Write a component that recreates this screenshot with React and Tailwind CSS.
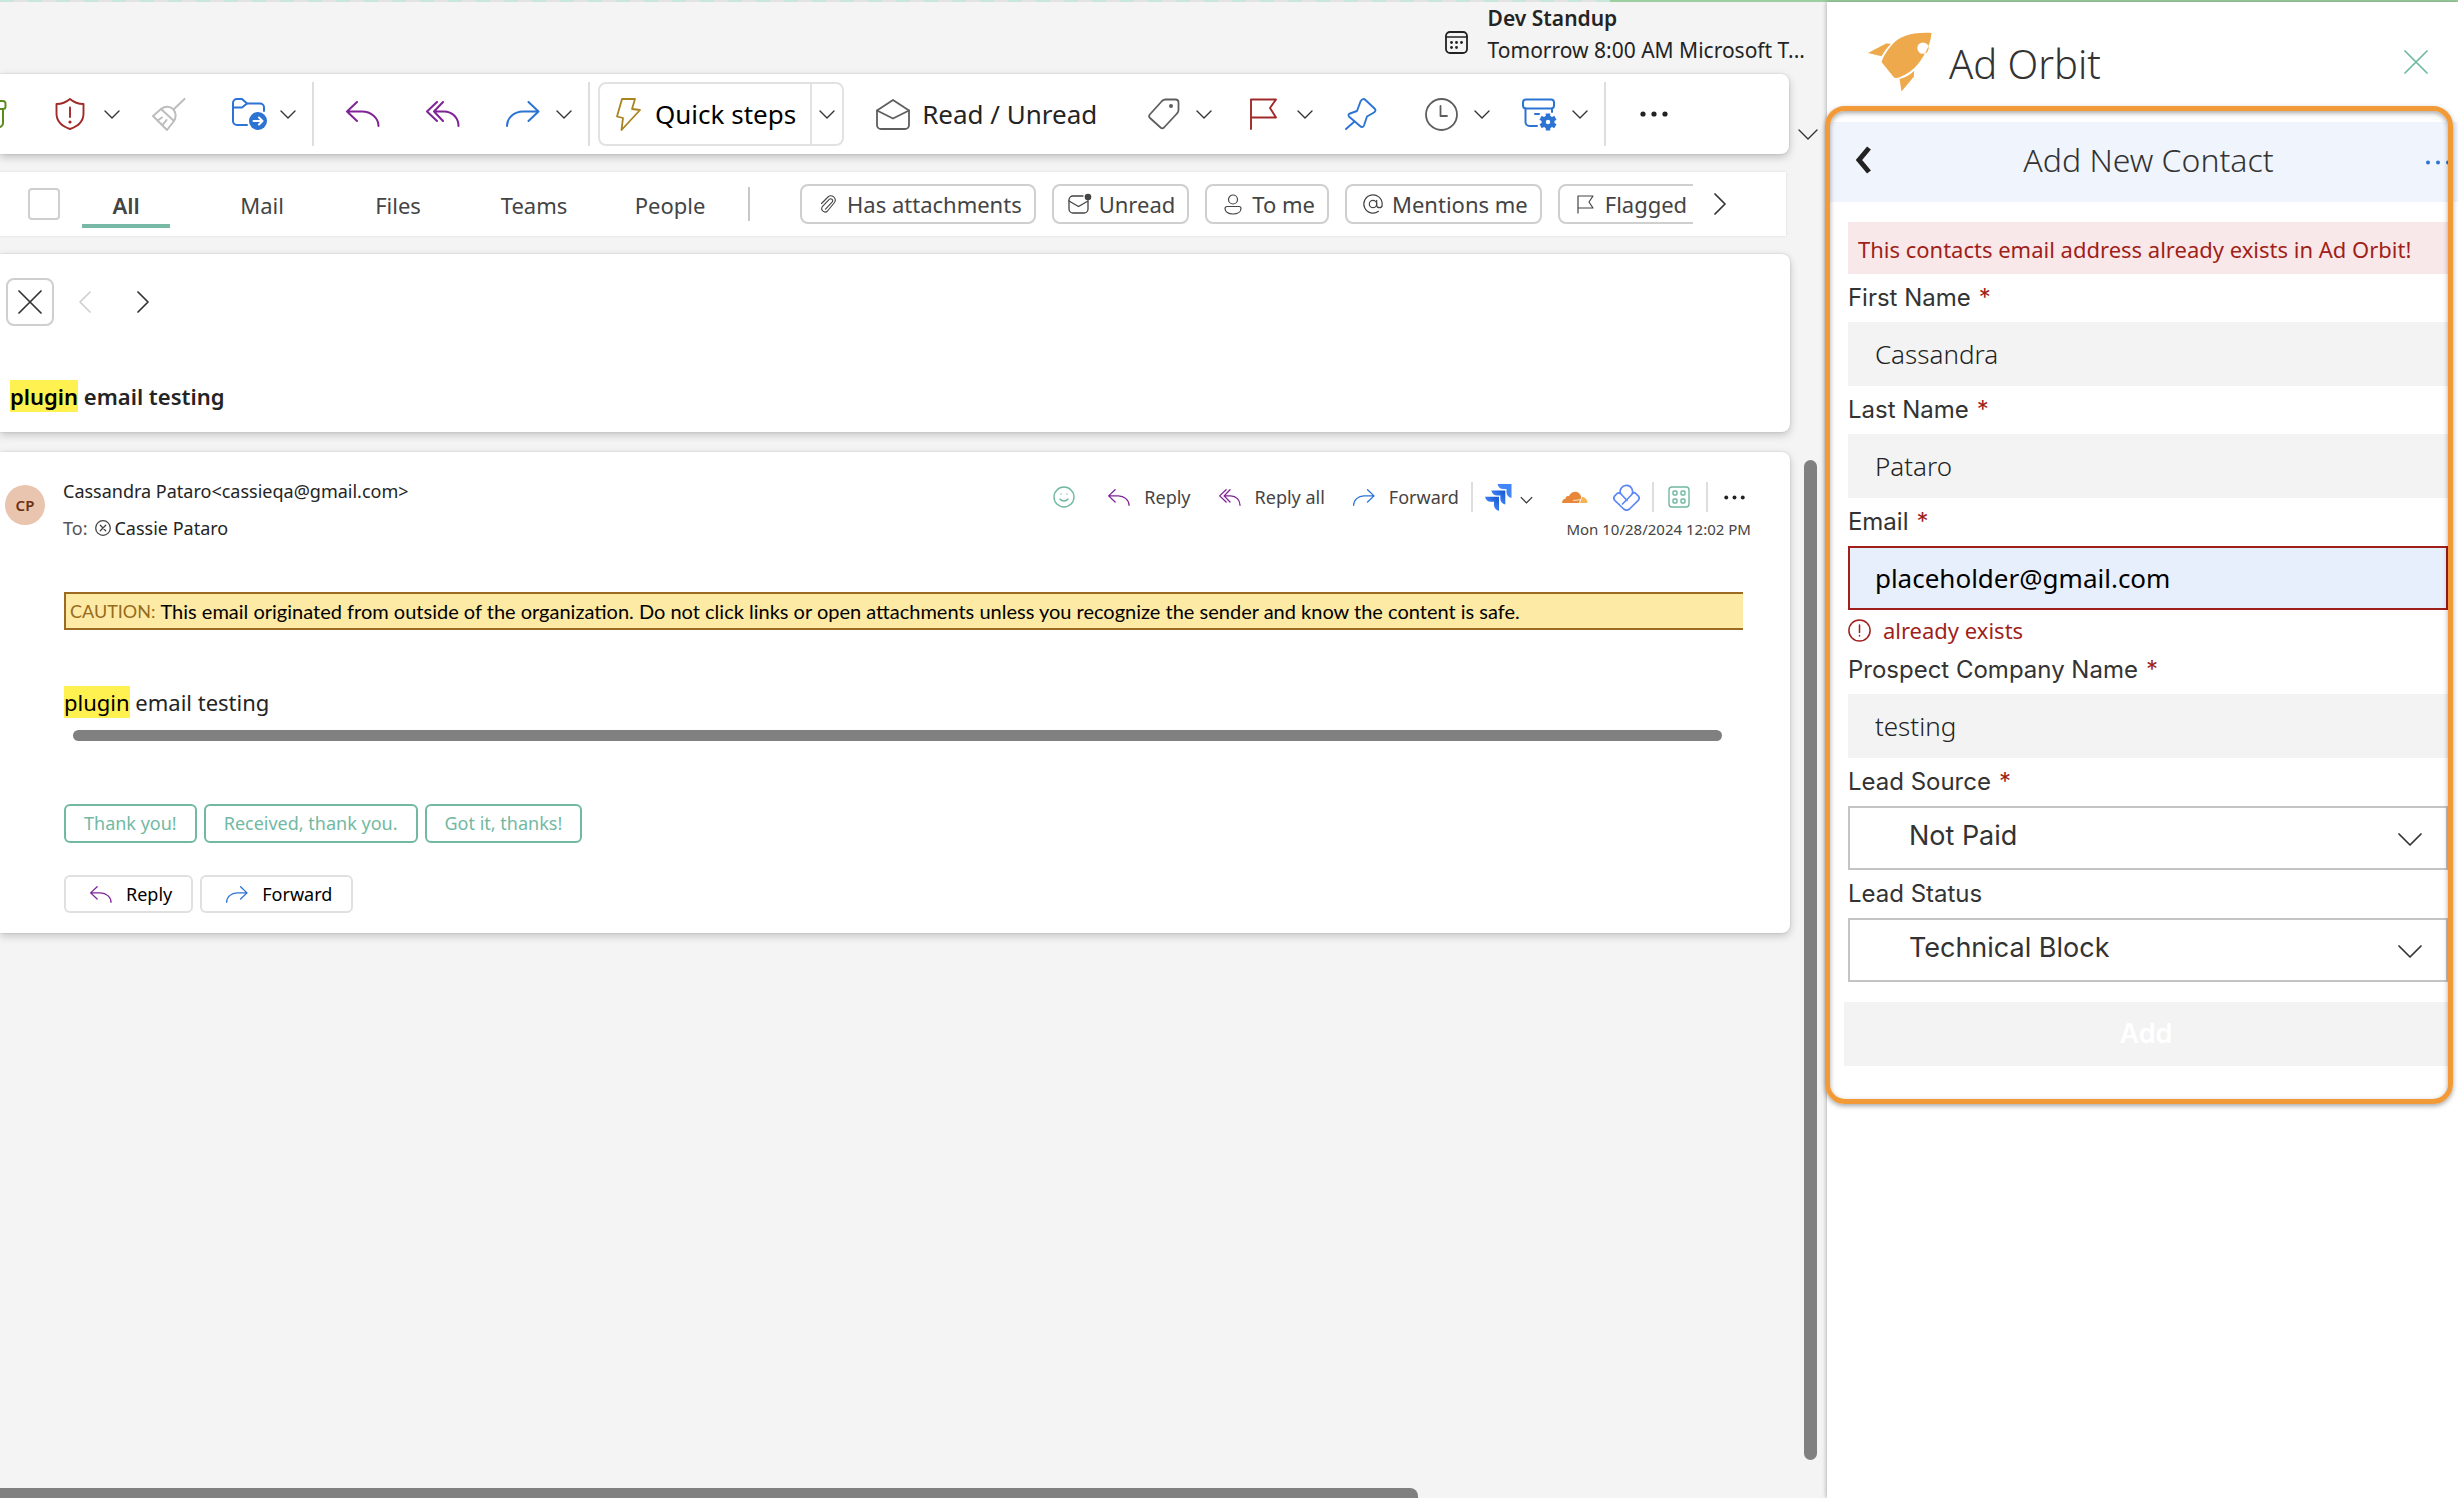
import { useState } from "react";
import { AtSign, Smile } from "lucide-react";

/* ---------- Icons ---------- */

function Svg({ w, h, stroke = 2, className = "", children }) {
  return (
    <svg
      width={w}
      height={h}
      viewBox={`0 0 ${w} ${h}`}
      fill="none"
      stroke="currentColor"
      strokeWidth={stroke}
      strokeLinecap="round"
      strokeLinejoin="round"
      className={`shrink-0 ${className}`}
      aria-hidden="true"
    >
      {children}
    </svg>
  );
}

const ChevronDown = ({ className = "" }) => (
  <Svg w={16} h={9} stroke={1.4} className={`text-[#333] ${className}`}>
    <path d="M1 1l7 7 7-7" />
  </Svg>
);

const ChevronSide = ({ left, className = "" }) => (
  <Svg w={12} h={22} stroke={1.7} className={className}>
    <path d={left ? "M11 1L1 11l10 10" : "M1 1l10 10L1 21"} />
  </Svg>
);

const Cross = ({ className = "" }) => (
  <Svg w={24} h={24} stroke={1.7} className={className}>
    <path d="M1 1l22 22M23 1L1 23" />
  </Svg>
);

const Dots = ({ small }) => (
  <svg
    width={small ? 21 : 28}
    height={small ? 5 : 6}
    viewBox="0 0 28 6"
    className="shrink-0 text-[#222]"
    fill="currentColor"
    aria-hidden="true"
  >
    <circle cx="3" cy="3" r="2.6" />
    <circle cx="14" cy="3" r="2.6" />
    <circle cx="25" cy="3" r="2.6" />
  </svg>
);

const arrowPaths = {
  reply: "M11 1L1 10.5 11 20M1 10.5h15C25 10.5 32.5 17 32.5 25",
  replyAll: "M11 1L1 10.5 11 20M17 1L8 10.5 17 20M8 10.5h10c8.5 0 14.5 6.5 14.5 14.5",
  forward: "M22.5 1l10 9.5-10 9.5M32.5 10.5H17C8 10.5 1 17 1 25",
};

// Reply, reply all and forward share one size and are scaled down in the message card
function Arrow({ kind, small }) {
  return (
    <svg
      width={small ? 22 : 34}
      height={small ? 17 : 26}
      viewBox="0 0 34 26"
      fill="none"
      stroke="currentColor"
      strokeWidth="2"
      strokeLinecap="round"
      strokeLinejoin="round"
      className={kind === "forward" ? "shrink-0 text-[#2b74d4]" : "shrink-0 text-[#7f2396]"}
      aria-hidden="true"
    >
      <path d={arrowPaths[kind]} />
    </svg>
  );
}

const ArchiveEdge = () => (
  <Svg w={7} h={28} className="text-[#5b8a1f]">
    <path d="M-4 1h7a2.5 2.5 0 0 1 2.5 2.5v3A2.5 2.5 0 0 1 3 9h-7M3 9v14a4 4 0 0 1-4 4" />
  </Svg>
);

const ShieldIcon = () => (
  <Svg w={30} h={32} stroke={1.9} className="text-[#a02a2a]">
    <path d="M15 1C11 4.5 6.5 6 1.5 6v9.5C1.5 23 6 28 15 31c9-3 13.5-8 13.5-15.5V6C23.5 6 19 4.500 15 1z" />
    <path d="M15 9.5V19" />
    <circle cx="15" cy="24" r="1.6" fill="currentColor" stroke="none" />
  </Svg>
);

const BroomIcon = () => (
  <Svg w={34} h={33} className="text-[#bdbdbd]">
    <path d="M32.5 1L22 11" />
    <path d="M1 18l8-7c4-3 9-3 12 0s3.5 8 1 12l-7 9z" />
    <path d="M9 11l13 12M5.500 22.5l4.500-3M10.500 27l4-5" />
  </Svg>
);

const FolderMoveIcon = () => (
  <Svg w={36} h={33} className="text-[#2b74d4]">
    <path d="M15 27H5a4 4 0 0 1-4-4V5a4 4 0 0 1 4-4h5l5 4.5h13a4 4 0 0 1 4 4V13" />
    <path d="M1 9.5h9l5-4" />
    <circle cx="26" cy="23" r="9" fill="currentColor" stroke="none" />
    <path d="M21.5 23h9M27 19.5l3.5 3.5-3.5 3.5" stroke="white" />
  </Svg>
);

const BoltIcon = () => (
  <Svg w={25} h={33} stroke={1.8} className="text-[#a9831f]">
    <path d="M6 1h13l-3 10 8 1L5.5 32 7 20l-6-1.5z" />
  </Svg>
);

const EnvelopeIcon = () => (
  <Svg w={34} h={31} stroke={1.8} className="text-[#5e5e5e]">
    <path d="M1 11.5L17 1l16 10.5V26a4 4 0 0 1-4 4H5a4 4 0 0 1-4-4z" />
    <path d="M1 11.5l16 8 16-8" />
  </Svg>
);

const TagIcon = () => (
  <Svg w={32} h={32} stroke={1.8} className="text-[#5e5e5e]">
    <path d="M17.5 1.5h10a3 3 0 0 1 3 3V12c0 1.500-.5 2.500-1.500 3.500L16 29.5c-1.2 1.2-2.3 1.2-3.5 0L2 20c-1.2-1.2-1.2-2.3-.2-3.5L14 3c1-1 2-1.5 3.5-1.5z" />
    <circle cx="23" cy="8" r="2" fill="currentColor" stroke="none" />
  </Svg>
);

const FlagIcon = () => (
  <Svg w={28} h={32} stroke={1.9} className="text-[#a02a2a]">
    <path d="M1 31V1.5h25L20 10l6 9.5H1" />
  </Svg>
);

const PinIcon = () => (
  <Svg w={32} h={32} stroke={1.9} className="text-[#2b74d4]">
    <path d="M15.5 3.5c1.5-3 3.5-3 5-1.500l9 8.500c1.500 1.500 1.200 3-.5 4L22 18.5l-3 9c-.8 2-2.5 2-4 .5L4.500 19c-1.500-1.500-1.500-2.700.5-3.500l7-2.500z" />
    <path d="M9.5 23.5L1 31" />
  </Svg>
);

const ClockIcon = () => (
  <Svg w={33} h={33} stroke={1.8} className="text-[#5e5e5e]">
    <circle cx="16.5" cy="16.5" r="15.5" />
    <path d="M15.5 8v10H22" />
  </Svg>
);

const ArchiveGearIcon = () => (
  <Svg w={36} h={33} className="text-[#2b74d4]">
    <rect x="1" y="1.5" width="31" height="9" rx="3" />
    <path d="M3.5 10.5V24a4 4 0 0 0 4 4H15M30 11v3M13 16h4" />
    <g strokeWidth="4.5" strokeLinecap="butt">
      <path d="M26 15.5v17M18.6 19.7l14.8 8.600M33.4 19.7l-14.8 8.600" />
    </g>
    <circle cx="26" cy="24" r="6.5" fill="currentColor" stroke="none" />
    <circle cx="26" cy="24" r="2.2" fill="white" stroke="none" />
  </Svg>
);

const CalendarIcon = () => (
  <Svg w={23} h={23} stroke={1.8} className="text-[#222]">
    <rect x="1" y="1" width="21" height="21" rx="4" />
    <path d="M1 6h21" strokeWidth="1.5" />
    <g fill="currentColor" stroke="none">
      <circle cx="6.5" cy="11.5" r="1.4" />
      <circle cx="11.5" cy="11.5" r="1.4" />
      <circle cx="16.5" cy="11.5" r="1.4" />
      <circle cx="6.5" cy="16.5" r="1.4" />
      <circle cx="11.5" cy="16.5" r="1.4" />
    </g>
  </Svg>
);

const ClipIcon = () => (
  <Svg w={17} h={19} stroke={1.1}>
    <path d="M1.5 8.5L8 2a4.300 4.300 0 0 1 6.500 5.500L7.500 16a3.400 3.400 0 0 1-5.200-4.300l7-7.400a2 2 0 0 1 3 2.600l-6.800 7.300" />
  </Svg>
);

const UnreadIcon = () => (
  <Svg w={24} h={22} stroke={1.3}>
    <path d="M15 3H5a4 4 0 0 0-4 4v9a4 4 0 0 0 4 4h11a4 4 0 0 0 4-4V8" />
    <path d="M1 8l9.5 5.5L20 8" />
    <circle cx="20" cy="4" r="3.300" fill="currentColor" stroke="none" />
  </Svg>
);

const PersonIcon = () => (
  <Svg w={18} h={21} stroke={1.2}>
    <circle cx="9" cy="5.5" r="4.5" />
    <path d="M3 12.5h12a2 2 0 0 1 2 2c0 3.5-3.5 5.500-8 5.500s-8-2-8-5.500a2 2 0 0 1 2-2z" />
  </Svg>
);

const FlagSmallIcon = () => (
  <Svg w={17} h={19} stroke={1.2}>
    <path d="M1 18V1h15l-4 6 4 6H1" />
  </Svg>
);

const JiraIcon = () => (
  <svg width="27" height="27" viewBox="0 0 27 27" className="shrink-0" aria-hidden="true">
    <defs>
      <linearGradient id="jira" x1="1" y1="0" x2="0.2" y2="0.8">
        <stop offset="0.2" stopColor="#1e5fd8" />
        <stop offset="0.8" stopColor="#4285f6" />
      </linearGradient>
    </defs>
    {[[0, 12.8], [6.3, 6.4], [12.5, 0]].map(([x, y]) => (
      <path
        key={x}
        transform={`translate(${x} ${y})`}
        fill={x > 12 ? "#4285f6" : "url(#jira)"}
        d="M0 0h14v14c-3-.6-5-2.800-5-5.700V5H5.800C2.900 5 .6 3 0 0z"
      />
    ))}
  </svg>
);

const CloudIcon = () => (
  <svg width="26" height="13" viewBox="0 0 26 13" className="shrink-0" aria-hidden="true">
    <path d="M0 12c0-2.800 1.500-4 3.500-4.200C3.500 5.500 5.300 4.300 7 5.200 9-.5 17.500-1.300 19.300 6L17 12z" fill="#e8873a" />
    <path d="M18 12l2-6c3.2 0 5.300 2.500 5.500 6z" fill="#f5b255" />
    <path d="M11 9.500l8-.8" stroke="#fff" strokeWidth="0.8" />
  </svg>
);

const LoopIcon = () => (
  <Svg w={27} h={27} stroke={1.7} className="text-[#5d87f5]">
    <path d="M14 16.500L7.500 9.500c-1.200-1-2.300-1-3.400 0L2 11.700c-1.600 1.700-1.600 3.200 0 4.900l8.700 8.400c2 1.700 3.800 1.700 5.800 0l8.500-8.400c1.600-1.700 1.600-3.200 0-4.900L22.800 9.500c-1-1-2-1-3-.2" />
    <path d="M7.500 9.500A6.200 6.200 0 1 1 18.800 10.500L9.500 20" />
  </Svg>
);

const AppsIcon = () => (
  <Svg w={22} h={22} stroke={1.4} className="text-[#6fb8a0]">
    <rect x="1" y="1" width="20" height="20" rx="3" />
    <rect x="5" y="5" width="4" height="4" rx="1" />
    <rect x="13" y="5" width="4" height="4" rx="1" />
    <rect x="5" y="13" width="4" height="4" rx="1" />
    <rect x="13" y="13" width="4" height="4" rx="1" />
  </Svg>
);

const RocketIcon = () => (
  <svg width="64" height="60" viewBox="0 0 64 60" fill="#efa94d" className="shrink-0" aria-hidden="true">
    <path
      fillRule="evenodd"
      d="M63.5 1C44 0 31 4 23 14c-5 6-8 11-9.500 16L26 45.500c2 1 4 .5 6-.5 7-2.500 13-7 18-13C58 22 63 10 63.500 1zM55 10.400a5.700 5.700 0 1 1 0 11.400 5.700 5.700 0 0 1 0-11.400z"
    />
    <path d="M0 21l18-9.500 5 .3c-4 4-7 8-9.500 12.400z" />
    <path d="M46 39v5.500L33.500 59.500 31.500 47C37 45.500 42 43 46 39z" />
  </svg>
);

const WarningIcon = () => (
  <Svg w={23} h={23} stroke={1.5}>
    <circle cx="11.5" cy="11.5" r="10.6" />
    <path d="M11.5 6v7.500M11.500 16.500v.5" />
  </Svg>
);

/* ---------- Mail pane ---------- */

const Divider = ({ className = "" }) => (
  <span className={`w-0.5 shrink-0 bg-[#dedede] ${className}`} />
);

function Ribbon() {
  return (
    <div className="flex">
      <div className="flex h-20 min-w-0 flex-1 items-center rounded-r-lg bg-white shadow-[0_3px_8px_rgba(0,0,0,0.22),0_0_2px_rgba(0,0,0,0.15)]">
        <button aria-label="Archive"><ArchiveEdge /></button>
        <button className="ml-12 flex items-center gap-[19px]" aria-label="Report">
          <ShieldIcon />
          <ChevronDown />
        </button>
        <button className="ml-8" aria-label="Sweep" disabled><BroomIcon /></button>
        <button className="ml-[46px] flex items-center gap-3" aria-label="Move to">
          <FolderMoveIcon />
          <ChevronDown />
        </button>
        <Divider className="ml-4 h-16" />
        <button className="ml-8" aria-label="Reply"><Arrow kind="reply" /></button>
        <button className="ml-[46px]" aria-label="Reply all"><Arrow kind="replyAll" /></button>
        <button className="ml-[46px] flex items-center gap-4" aria-label="Forward">
          <Arrow kind="forward" />
          <ChevronDown />
        </button>
        <Divider className="ml-4 h-16" />
        <div className="ml-2 flex h-16 shrink-0 rounded-lg border-2 border-[#e2e2e2]">
          <button className="flex items-center gap-3.5 pl-4 pr-[14px] text-[26px] text-black">
            <BoltIcon />
            Quick steps
          </button>
          <button className="flex items-center border-l-2 border-[#e2e2e2] px-[7px]" aria-label="More quick steps">
            <ChevronDown />
          </button>
        </div>
        <button className="ml-8 flex shrink-0 items-center gap-3 text-[26px] whitespace-nowrap text-[#242424]">
          <EnvelopeIcon />
          Read / Unread
        </button>
        <button className="ml-[51px] flex items-center gap-4" aria-label="Categorize">
          <TagIcon />
          <ChevronDown />
        </button>
        <button className="ml-[38px] flex items-center gap-[19px]" aria-label="Flag">
          <FlagIcon />
          <ChevronDown />
        </button>
        <button className="ml-8" aria-label="Pin"><PinIcon /></button>
        <button className="ml-12 flex items-center gap-4" aria-label="Snooze">
          <ClockIcon />
          <ChevronDown />
        </button>
        <button className="ml-8 flex items-center gap-[14px]" aria-label="Archive settings">
          <ArchiveGearIcon />
          <ChevronDown />
        </button>
        <Divider className="ml-4 h-16" />
        <button className="ml-[34px]" aria-label="More options"><Dots /></button>
      </div>
      <button className="flex w-[38px] items-end justify-center pb-3.5" aria-label="Ribbon options">
        <Svg w={20} h={11} stroke={1.4} className="text-[#333]">
          <path d="M1 1l9 9 9-9" />
        </Svg>
      </button>
    </div>
  );
}

const tabs = ["All", "Mail", "Files", "Teams", "People"];

const filters = [
  { label: "Has attachments", icon: <ClipIcon /> },
  { label: "Unread", icon: <UnreadIcon /> },
  { label: "To me", icon: <PersonIcon /> },
  { label: "Mentions me", icon: <AtSign size={22} strokeWidth={1.3} /> },
  { label: "Flagged", icon: <FlagSmallIcon /> },
];

function FilterBar() {
  const [tab, setTab] = useState("All");
  return (
    <div className="mr-[41px] mt-[18px] flex h-16 items-center bg-white pl-7 text-[22px] text-[#444] shadow-[0_0_2px_rgba(0,0,0,0.12)]">
      <input
        type="checkbox"
        aria-label="Select all"
        className="size-8 shrink-0 appearance-none rounded border-2 border-[#cfcfcf] bg-white"
      />
      <div className="ml-[22px] flex gap-12 self-start">
        {tabs.map((name) => (
          <button
            key={name}
            onClick={() => setTab(name)}
            className={
              name === tab
                ? "h-14 w-[88px] border-b-4 border-[#77b9a4] pt-3.5 font-semibold"
                : "h-14 w-[88px] border-b-4 border-transparent pt-3.5"
            }
          >
            {name}
          </button>
        ))}
      </div>
      <span className="ml-[34px] h-[34px] w-0.5 shrink-0 bg-[#c8c8c8]" />
      <div className="ml-[50px] flex min-w-0 flex-1 gap-4 overflow-hidden">
        {filters.map(({ label, icon }) => (
          <button
            key={label}
            className="flex h-10 shrink-0 items-center gap-[5px] whitespace-nowrap rounded-lg border-2 border-[#cfcfcf] px-3"
          >
            <span className="flex w-7 justify-center">{icon}</span>
            {label}
          </button>
        ))}
      </div>
      <button className="ml-[21px] mr-[60px]" aria-label="More filters">
        <ChevronSide className="text-[#333]" />
      </button>
    </div>
  );
}

function SubjectCard() {
  return (
    <div className="mr-[37px] mt-[18px] rounded-r-lg bg-white pb-5 pt-6 shadow-[0_3px_8px_rgba(0,0,0,0.2),0_0_2px_rgba(0,0,0,0.15)]">
      <div className="flex items-center pl-1.5">
        <button
          className="flex size-12 items-center justify-center rounded-lg border-2 border-[#cfcfcf] text-[#333]"
          aria-label="Close"
        >
          <Cross />
        </button>
        <button className="ml-[25px] text-[#cfcfcf]" aria-label="Previous message" disabled>
          <ChevronSide left />
        </button>
        <button className="ml-[46px] text-[#333]" aria-label="Next message">
          <ChevronSide />
        </button>
      </div>
      <h1 className="mt-[54px] pl-2.5 text-[22px] font-semibold leading-8">
        <mark className="inline-block bg-[#fff150] text-black">plugin</mark> email testing
      </h1>
    </div>
  );
}

function MessageActions() {
  return (
    <div className="flex h-[30px] items-center text-[18px] text-[#444]">
      <button className="text-[#6fb8a0]" aria-label="React">
        <Smile size={24} strokeWidth={1.4} />
      </button>
      <button className="ml-8 flex items-center gap-3.5"><Arrow kind="reply" small />Reply</button>
      <button className="ml-7 flex items-center gap-3.5"><Arrow kind="replyAll" small />Reply all</button>
      <button className="ml-7 flex items-center gap-3.5"><Arrow kind="forward" small />Forward</button>
      <Divider className="ml-3 h-[30px]" />
      <button className="ml-3 flex items-center gap-2" aria-label="Jira">
        <JiraIcon />
        <svg width="13" height="8" viewBox="0 0 16 9" fill="none" stroke="#333" strokeWidth="1.6" className="mt-1.5">
          <path d="M1 1l7 7 7-7" />
        </svg>
      </button>
      <button className="ml-[29px]" aria-label="Cloudflare"><CloudIcon /></button>
      <button className="ml-[25px]" aria-label="Loop"><LoopIcon /></button>
      <Divider className="ml-3 h-[30px]" />
      <button className="ml-3.5" aria-label="Apps"><AppsIcon /></button>
      <Divider className="ml-4 h-[30px]" />
      <button className="ml-4 mr-1.5" aria-label="More actions"><Dots small /></button>
    </div>
  );
}

function MessageCard() {
  return (
    <article className="rounded-r-lg bg-white pb-5 pt-[21px] shadow-[0_3px_8px_rgba(0,0,0,0.2),0_0_2px_rgba(0,0,0,0.15)]">
      <header className="flex pr-[39px]">
        <div className="ml-[5px] mt-3 flex size-10 shrink-0 items-center justify-center rounded-full bg-[#e9c4ae] text-[15px] font-semibold text-[#6d3013]">
          CP
        </div>
        <div className="ml-[18px] flex flex-col gap-px text-[18px] leading-9">
          <p>Cassandra Pataro&lt;cassieqa@gmail.com&gt;</p>
          <p className="flex items-center">
            <span className="text-[#555]">To:</span>
            <Svg w={16} h={16} stroke={1.3} className="ml-2 mr-[3px] text-[#444]">
              <circle cx="8" cy="8" r="7.300" />
              <path d="M5.3 5.3l5.4 5.4M10.7 5.3l-5.4 5.4" />
            </Svg>
            Cassie Pataro
          </p>
        </div>
        <div className="ml-auto mt-[9px] flex flex-col items-end">
          <MessageActions />
          <time className="text-[15px] leading-[34px] text-[#444]">Mon 10/28/2024 12:02 PM</time>
        </div>
      </header>

      <div className="ml-16">
        <p className="mr-[47px] mt-[46px] flex h-[38px] items-center gap-[5px] overflow-hidden whitespace-nowrap border-y-2 border-l-2 border-[#9c6a20] bg-[#fdeaa5] pl-1 font-['Lato',sans-serif] text-[20px] text-black">
          <span className="text-[18px] text-[#976a1c]">CAUTION:</span>
          <span>
            This email originated from outside of the organization. Do not click links or open attachments unless you
            recognize the sender and know the content is safe.
          </span>
        </p>

        <p className="mt-14 text-[22px] leading-8">
          <mark className="inline-block bg-[#fff150] text-black">plugin</mark> email testing
        </p>
        <div className="ml-[9px] mr-[68px] mt-3 h-[11px] rounded-full bg-[#808080]" />

        <div className="mt-[63px] flex gap-[7px] text-[18px] text-[#72b9a3]">
          {["Thank you!", "Received, thank you.", "Got it, thanks!"].map((text) => (
            <button key={text} className="h-[39px] rounded-md border-2 border-[#72b9a3] px-[18px]">
              {text}
            </button>
          ))}
        </div>

        <div className="mt-8 flex gap-[7px] text-[18px] text-black">
          <button className="flex h-[38px] items-center gap-3.5 rounded-md border-2 border-[#e0e0e0] pl-6 pr-[19px]">
            <Arrow kind="reply" small />
            Reply
          </button>
          <button className="flex h-[38px] items-center gap-3.5 rounded-md border-2 border-[#e0e0e0] pl-6 pr-[19px]">
            <Arrow kind="forward" small />
            Forward
          </button>
        </div>
      </div>
    </article>
  );
}

function MailPane() {
  return (
    <main className="flex min-w-0 flex-col overflow-hidden bg-[#f4f4f4]">
      <div className="flex h-[72px] justify-end pr-[22px] text-[21px] leading-8">
        <div className="mr-5 mt-2 flex items-center"><CalendarIcon /></div>
        <div>
          <p className="font-semibold">Dev Standup</p>
          <p>Tomorrow 8:00 AM Microsoft T...</p>
        </div>
      </div>
      <Ribbon />
      <FilterBar />
      <SubjectCard />
      <div className="mt-5 flex flex-1">
        <div className="min-w-0 flex-1"><MessageCard /></div>
        <div className="mb-7 ml-3.5 mr-2.5 mt-2 w-[13px] rounded-full bg-[#808080]" />
      </div>
      <div className="h-2.5 w-[77.6%] rounded-tr-lg bg-[#808080]" />
    </main>
  );
}

/* ---------- Ad Orbit pane ---------- */

function Label({ id, required, children }) {
  return (
    <label htmlFor={id} className="flex h-12 items-center gap-2 font-['Inter',sans-serif] text-[24px] text-[#333]">
      {children}
      {required && <span className="text-[#a01f1a]">*</span>}
    </label>
  );
}

function TextField({ id, label, value }) {
  return (
    <div>
      <Label id={id} required>{label}</Label>
      <input
        id={id}
        defaultValue={value}
        className="h-16 w-full bg-[#f3f3f3] px-[27px] text-[26px] font-light text-[#222]"
      />
    </div>
  );
}

function SelectField({ id, label, required, options }) {
  return (
    <div>
      <Label id={id} required={required}>{label}</Label>
      <div className="relative">
        <select
          id={id}
          className="h-16 w-full appearance-none border-2 border-[#c4c4c4] bg-white pb-1 pl-[59px] font-['Inter',sans-serif] text-[27px] text-[#333]"
        >
          {options.map((o) => (
            <option key={o}>{o}</option>
          ))}
        </select>
        <Svg w={24} h={14} stroke={1.7} className="pointer-events-none absolute right-[26px] top-[27px] text-[#333]">
          <path d="M1 1l11 11L23 1" />
        </Svg>
      </div>
    </div>
  );
}

function AdOrbitPane() {
  return (
    <aside className="relative min-w-0 bg-white shadow-[-1px_0_4px_rgba(0,0,0,0.25)]">
      <div className="flex h-[120px] items-center pl-[41px] pr-[30px]">
        <RocketIcon />
        <h2 className="ml-[17px] pt-1 text-[40px] font-light text-[#333]">Ad Orbit</h2>
        <button className="ml-auto text-[#6fb8a0]" aria-label="Close add-in">
          <Cross />
        </button>
      </div>

      <section className="relative pb-[38px]">
        <div className="flex h-20 items-center bg-[#f0f4fc] pb-1 pl-[27px]">
          <button aria-label="Back">
            <Svg w={18} h={28} stroke={5} className="text-[#222]">
              <path d="M15 2L5 14l10 12" strokeLinecap="butt" strokeLinejoin="miter" />
            </Svg>
          </button>
          <h3 className="flex-1 text-center text-[32px] font-light text-[#333]">Add New Contact</h3>
          <button className="mr-[5px] w-7 overflow-hidden pt-1" aria-label="More">
            <svg width="34" height="5" viewBox="0 0 34 5" fill="#2b74d4">
              <circle cx="3" cy="2.5" r="2" />
              <circle cx="13" cy="2.5" r="2" />
              <circle cx="23" cy="2.5" r="2" />
            </svg>
          </button>
        </div>

        <form className="mt-5 pl-[21px] pr-2.5" onSubmit={(e) => e.preventDefault()}>
          <p className="flex h-[52px] items-center whitespace-nowrap bg-[#f9e8e9] pl-2.5 pt-0.5 text-[22px] text-[#a01f1a]">
            This contacts email address already exists in Ad Orbit!
          </p>
          <TextField id="first-name" label="First Name" value="Cassandra" />
          <TextField id="last-name" label="Last Name" value="Pataro" />

          <Label id="email" required>Email</Label>
          <input
            id="email"
            type="email"
            defaultValue="placeholder@gmail.com"
            aria-describedby="email-error"
            className="h-16 w-full border-2 border-[#a01f1a] bg-[#e8effc] px-[25px] text-[26px] text-black"
          />
          <p id="email-error" className="flex h-9 items-center gap-3 pt-1 text-[22px] text-[#a01f1a]">
            <WarningIcon />
            already exists
          </p>

          <TextField id="company" label="Prospect Company Name" value="testing" />
          <SelectField id="lead-source" label="Lead Source" required options={["Not Paid", "Paid"]} />
          <SelectField id="lead-status" label="Lead Status" options={["Technical Block", "Open"]} />

          <div className="-ml-1 mt-5">
            <button
              disabled
              className="h-16 w-full bg-[#f3f3f3] font-['Inter',sans-serif] text-[27px] font-semibold text-white"
            >
              Add
            </button>
          </div>
        </form>

        {/* Highlight frame over the form */}
        <div className="pointer-events-none absolute -left-0.5 -top-4 bottom-0 right-[5px] rounded-[20px] border-[5px] border-[#f29a38] shadow-[0_2px_5px_rgba(0,0,0,0.35),inset_0_2px_5px_rgba(0,0,0,0.35)]" />
      </section>
    </aside>
  );
}

export default function App() {
  return (
    <div className="flex min-h-screen flex-col font-['Noto_Sans',sans-serif] text-[#242424]">
      {/* Loading strip */}
      <div className="flex h-0.5">
        <div className="w-[65.5%] bg-[repeating-linear-gradient(90deg,#c8e6da_0_14px,#e3e3e3_14px_28px)]" />
        <div className="flex-1 bg-[#9ccf9f]" />
      </div>
      <div className="grid flex-1 grid-cols-[2.895fr_1fr]">
        <MailPane />
        <AdOrbitPane />
      </div>
    </div>
  );
}
